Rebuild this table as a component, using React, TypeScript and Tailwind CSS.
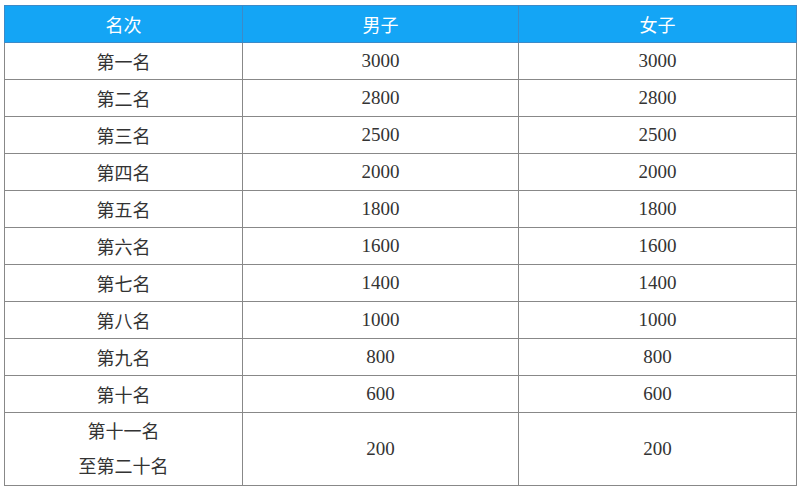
import React from 'react';

const rows = [
  { name: '第一名', men: 3000, women: 3000 },
  { name: '第二名', men: 2800, women: 2800 },
  { name: '第三名', men: 2500, women: 2500 },
  { name: '第四名', men: 2000, women: 2000 },
  { name: '第五名', men: 1800, women: 1800 },
  { name: '第六名', men: 1600, women: 1600 },
  { name: '第七名', men: 1400, women: 1400 },
  { name: '第八名', men: 1000, women: 1000 },
  { name: '第九名', men: 800, women: 800 },
  { name: '第十名', men: 600, women: 600 },
];

const cjk = "[font-family:'Noto_Sans_CJK_SC',sans-serif]";
const serif = "[font-family:'Liberation_Serif',serif]";

const App = () => {
  return (
    <div className="w-[800px] h-[491px] bg-white pt-[5px] pl-[4px]">
      <table className="w-[792px] border-collapse table-fixed">
        <colgroup>
          <col className="w-[238px]" />
          <col className="w-[276px]" />
          <col className="w-[278px]" />
        </colgroup>
        <thead>
          <tr className="h-[37px] bg-[#14a5f5] text-white text-[18px]">
            <th className={`font-normal border border-[#3c8ac8] ${cjk}`}>名次</th>
            <th className={`font-normal border border-[#3c8ac8] ${cjk}`}>男子</th>
            <th className={`font-normal border border-[#3c8ac8] ${cjk}`}>女子</th>
          </tr>
        </thead>
        <tbody className="text-[#333]">
          {rows.map((r) => (
            <tr key={r.name} className="h-[37px]">
              <td className={`text-center text-[18px] border border-[#888] ${cjk}`}>{r.name}</td>
              <td className={`text-center text-[19px] border border-[#888] ${serif}`}>{r.men}</td>
              <td className={`text-center text-[19px] border border-[#888] ${serif}`}>{r.women}</td>
            </tr>
          ))}
          <tr className="h-[73px]">
            <td className={`text-center text-[18px] leading-[35px] pb-[2px] border border-[#888] ${cjk}`}>
              <div>第十一名</div>
              <div>至第二十名</div>
            </td>
            <td className={`text-center text-[19px] border border-[#888] ${serif}`}>200</td>
            <td className={`text-center text-[19px] border border-[#888] ${serif}`}>200</td>
          </tr>
        </tbody>
      </table>
    </div>
  );
};

export default App;
